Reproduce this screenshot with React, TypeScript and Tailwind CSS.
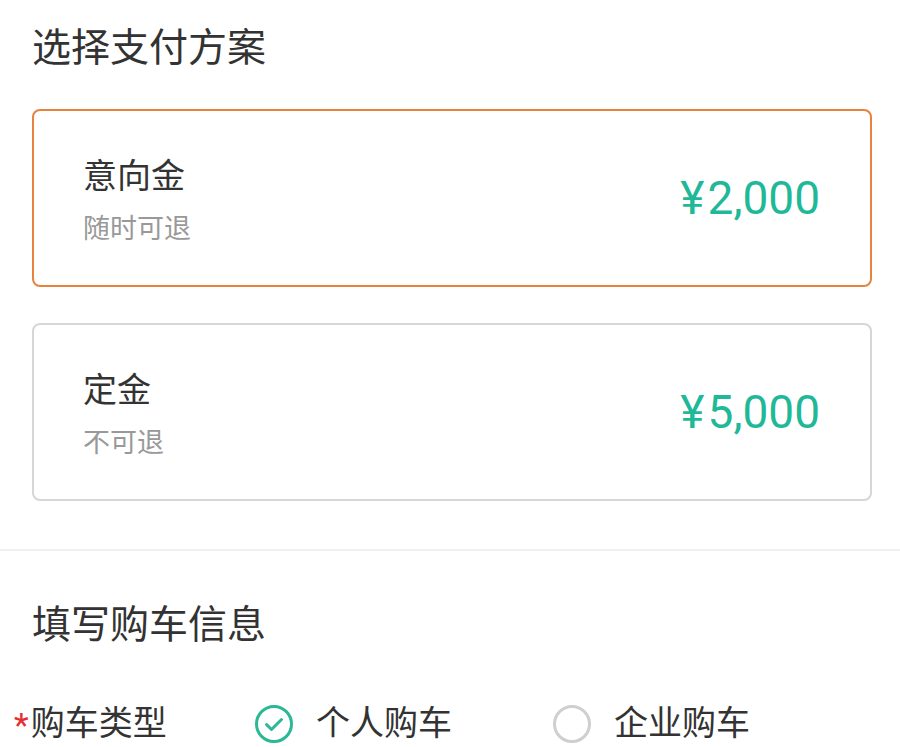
import React from 'react';

const FONT = '"Noto Sans CJK SC", "Noto Sans", sans-serif';

const plans = [
  { name: '意向金', note: '随时可退', price: '2,000', active: true },
  { name: '定金', note: '不可退', price: '5,000', active: false },
];

function CheckCircle({ checked }: { checked: boolean }) {
  return (
    <svg width="40" height="40" viewBox="0 0 40 40" fill="none" className="translate-y-[3px]">
      <circle cx="20" cy="20" r="17.5" stroke={checked ? '#2bb896' : '#cfcfcf'} strokeWidth="3" />
      {checked && <path d="M12.5 20.5l5 5 10-10" stroke="#2bb896" strokeWidth="3" strokeLinecap="round" strokeLinejoin="round" />}
    </svg>
  );
}

export default function App() {
  return (
    <div className="h-[747px] w-[900px] overflow-hidden bg-white text-[#333]" style={{ fontFamily: FONT }}>
      {/* 支付方案 */}
      <div className="pb-[48px] pl-[32px] pr-[28px] pt-[20px]">
        <h2 className="text-[39px] leading-[48px] font-normal">选择支付方案</h2>
        <div className="mt-[41px] flex flex-col gap-[36px]">
          {plans.map(plan => (
            <div
              key={plan.name}
              className={`flex h-[178px] items-center justify-between rounded-[8px] border-2 pl-[49px] pr-[50px] ${plan.active ? 'border-[#e6843f]' : 'border-[#d6d6d6]'}`}
            >
              <div>
                <p className="text-[34px] leading-[44px]">{plan.name}</p>
                <p className="mt-[14px] text-[27px] leading-[34px] text-[#999]">{plan.note}</p>
              </div>
              <p className="flex items-baseline text-[46px] leading-none text-[#1fb898]" style={{ fontFamily: 'Roboto, sans-serif' }}>
                <span className="mr-[3px]">¥</span>
                {plan.price}
              </p>
            </div>
          ))}
        </div>
      </div>

      <div className="h-[2px] bg-[#f0f0f0]" />

      {/* 购车信息 */}
      <div className="pt-[46px]">
        <h2 className="px-[32px] text-[39px] leading-[48px] font-normal">填写购车信息</h2>
        <div className="mt-[54px] flex items-center pl-[14px] text-[34px] leading-[44px]">
          <div className="flex w-[240px] items-center">
            <span className="relative top-[4px] mr-[2px] text-[34px] leading-[44px] text-[#e62e2e]" style={{ fontFamily: 'Roboto, sans-serif' }}>*</span>
            <span>购车类型</span>
          </div>
          <div className="flex w-[298px] items-center gap-[22px]">
            <CheckCircle checked />
            <span>个人购车</span>
          </div>
          <div className="flex items-center gap-[22px]">
            <CheckCircle checked={false} />
            <span>企业购车</span>
          </div>
        </div>
      </div>
    </div>
  );
}
